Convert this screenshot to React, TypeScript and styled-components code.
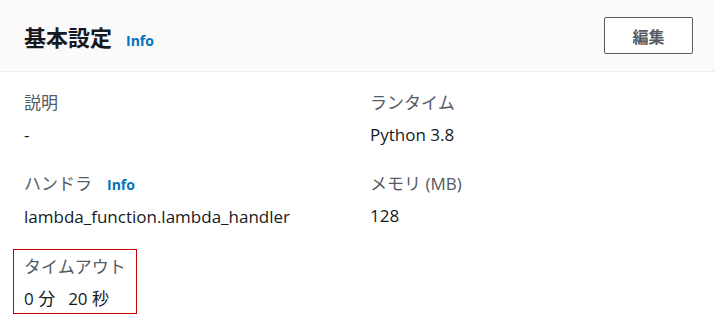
import React from "react";
import styled, { createGlobalStyle } from "styled-components";

const Global = createGlobalStyle`
  html, body { margin: 0; padding: 0; background: #ffffff; }
  body { font-family: "Open Sans", "Noto Sans CJK JP", sans-serif; }
`;

const Panel = styled.div`
  width: 715px;
  height: 330px;
  background: #ffffff;
  box-sizing: border-box;
  overflow: hidden;
`;

const Header = styled.div`
  height: 72px;
  box-sizing: border-box;
  background: #fafafa;
  border-bottom: 1px solid #eaeded;
  display: flex;
  align-items: center;
  justify-content: space-between;
  padding: 0 22px 0 24px;
`;

const TitleRow = styled.div`
  display: flex;
  align-items: baseline;
  gap: 14px;
`;

const Title = styled.h2`
  margin: 0;
  font-family: "Noto Sans CJK JP", sans-serif;
  font-size: 22px;
  font-weight: 700;
  color: #16191f;
`;

const InfoLink = styled.a`
  font-family: "Open Sans", sans-serif;
  font-size: 14px;
  font-weight: 700;
  color: #0073bb;
  text-decoration: none;
`;

const Button = styled.button`
  width: 89px;
  height: 37px;
  background: #ffffff;
  border: 1px solid #545b64;
  border-radius: 2px;
  font-family: "Noto Sans CJK JP", sans-serif;
  font-size: 16px;
  font-weight: 700;
  color: #545b64;
  cursor: pointer;
`;

const Body = styled.div`
  display: grid;
  grid-template-columns: 346px 1fr;
  padding: 18px 24px 0 24px;
`;

const Field = styled.div<{ $highlight?: boolean }>`
  display: flex;
  flex-direction: column;
  gap: 7px;
  padding-bottom: 24px;
  ${(p) =>
    p.$highlight &&
    `
    border: 1px solid #cc0000;
    margin: -4px 0 0 -11px;
    padding: 4px 10px 2px 10px;
    justify-self: start;
  `}
`;

const Label = styled.div`
  display: flex;
  align-items: baseline;
  gap: 15px;
  font-family: "Open Sans", "Noto Sans CJK JP", sans-serif;
  font-size: 17px;
  color: #545b64;
  line-height: 25px;
`;

const Value = styled.div`
  display: flex;
  gap: 13px;
  font-family: "Open Sans", "Noto Sans CJK JP", sans-serif;
  font-size: 17px;
  color: #16191f;
  line-height: 25px;
`;

export default function App() {
  return (
    <Panel>
      <Global />
      <Header>
        <TitleRow>
          <Title>基本設定</Title>
          <InfoLink>Info</InfoLink>
        </TitleRow>
        <Button>編集</Button>
      </Header>
      <Body>
        <Field>
          <Label>説明</Label>
          <Value>-</Value>
        </Field>
        <Field>
          <Label>ランタイム</Label>
          <Value>Python 3.8</Value>
        </Field>
        <Field>
          <Label>
            ハンドラ <InfoLink>Info</InfoLink>
          </Label>
          <Value>lambda_function.lambda_handler</Value>
        </Field>
        <Field>
          <Label>メモリ (MB)</Label>
          <Value>128</Value>
        </Field>
        <Field $highlight>
          <Label>タイムアウト</Label>
          <Value>
            <span>0 分</span>
            <span>20 秒</span>
          </Value>
        </Field>
      </Body>
    </Panel>
  );
}
